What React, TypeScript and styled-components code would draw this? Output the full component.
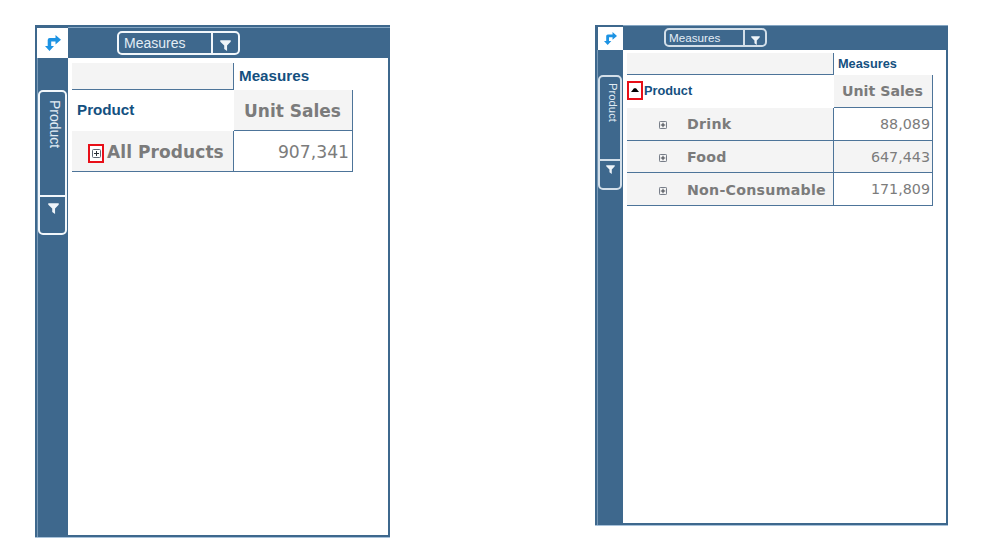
import React from "react";
import styled, { createGlobalStyle, ThemeProvider } from "styled-components";

const BLUE = "#3e688d";
const INK = "#14507f";
const LINE = "#4d7499";

const Global = createGlobalStyle`
  body { margin: 0; background: #fff; }
  * { box-sizing: border-box; }
`;

const large = {
  width: 355, height: 512, mt: 25,
  side: 33, head: 33, corner: 31, cornerH: 30,
  pillLeft: 49, pillTop: 6, pillW: 123, pillH: 24, pillText: 14, pillPad: 5, pillBtn: 27,
  sideTop: 32, sideW: 29, sideH: 145, sideText: 14, sideBtn: 38, sidePad: 8, funnel: 11,
  padTop: 5, padLeft: 4, c1: 162, c2: 119, r1: 27, r2: 41,
  head1: 15.2, headPad: 5, headLift: 2, body: 17, num: 17.2, numPad: 3, track: 0.08,
  arrow: 16, chipLine: "#f2f7fb",
};
type Scale = typeof large;
const small: Scale = {
  width: 353, height: 500, mt: 25,
  side: 28, head: 25, corner: 25, cornerH: 23,
  pillLeft: 41, pillTop: 3, pillW: 103, pillH: 19, pillText: 11.7, pillPad: 3, pillBtn: 22,
  sideTop: 25, sideW: 24, sideH: 115, sideText: 11.3, sideBtn: 29, sidePad: 6, funnel: 9,
  padTop: 3, padLeft: 4, c1: 207, c2: 99, r1: 22, r2: 33,
  head1: 12.75, headPad: 4, headLift: 0, body: 14.2, num: 14.3, numPad: 2, track: 0.25,
  arrow: 13, chipLine: "#d3dfe9",
};

declare module "styled-components" {
  export interface DefaultTheme extends Scale {}
}

const Page = styled.main`
  width: 987px;
  height: 549px;
  padding-left: 35px;
  display: flex;
  align-items: flex-start;
  gap: 205px;
  overflow: hidden;
  font-family: "Liberation Sans", Arial, sans-serif;
`;

const Panel = styled.section`
  flex: none;
  width: ${({ theme }) => theme.width}px;
  height: ${({ theme }) => theme.height}px;
  margin-top: ${({ theme }) => theme.mt}px;
  display: grid;
  grid-template: ${({ theme }) => theme.head}px 1fr / ${({ theme }) => theme.side}px 1fr;
  background: #fff;
  box-shadow: inset 0 0 0 2px ${BLUE}, 0 1px 0 #a8c2da;
`;

const Corner = styled.div`
  background: ${BLUE};
  display: flex;
  justify-content: flex-end;
  align-items: flex-end;
`;

const CornerButton = styled.div`
  width: ${({ theme }) => theme.corner}px;
  height: ${({ theme }) => theme.cornerH}px;
  background: #fff;
  display: flex;
  align-items: center;
  justify-content: center;
`;

const TopBar = styled.header`
  background: linear-gradient(#85a6c3, #85a6c3) 0 ${({ theme }) => (theme.body > 15 ? 2 : 0)}px / 100% 1px no-repeat ${BLUE};
  padding: ${({ theme }) => theme.pillTop}px 0 0 ${({ theme }) => theme.pillLeft}px;
`;

const SideBar = styled.aside`
  background: linear-gradient(90deg, transparent 2px, #7899b6 2px, #7899b6 3px, transparent 3px), ${BLUE};
  padding: ${({ theme }) => theme.sideTop}px 1px 0 0;
  display: flex;
  flex-direction: column;
  align-items: flex-end;
`;

const Chip = styled.div<{ $vertical?: boolean }>`
  display: flex;
  flex-direction: ${({ $vertical }) => ($vertical ? "column" : "row")};
  width: ${({ $vertical, theme }) => ($vertical ? theme.sideW : theme.pillW)}px;
  height: ${({ $vertical, theme }) => ($vertical ? theme.sideH : theme.pillH)}px;
  border: 2px solid ${({ theme }) => theme.chipLine};
  border-radius: 5px;
  background: ${BLUE};
  color: #e3edf5;
`;

const ChipLabel = styled.span<{ $vertical?: boolean }>`
  flex: 1;
  display: flex;
  align-items: center;
  white-space: nowrap;
  font-size: ${({ $vertical, theme }) => ($vertical ? theme.sideText : theme.pillText)}px;
  line-height: 1;
  writing-mode: ${({ $vertical }) => ($vertical ? "vertical-rl" : "horizontal-tb")};
  padding: ${({ $vertical, theme }) => ($vertical ? `${theme.sidePad}px 0 0 5px` : `0 0 0 ${theme.pillPad}px`)};
`;

const ChipButton = styled.span<{ $vertical?: boolean }>`
  flex: 0 0 ${({ $vertical, theme }) => ($vertical ? theme.sideBtn : theme.pillBtn)}px;
  display: flex;
  justify-content: center;
  align-items: ${({ $vertical }) => ($vertical ? "flex-start" : "center")};
  padding-top: ${({ $vertical, theme }) => ($vertical ? theme.sidePad - 2 : 5)}px;
  padding-left: ${({ $vertical }) => ($vertical ? 1 : 0)}px;
  border: 0 solid ${({ theme }) => theme.chipLine};
  border-width: ${({ $vertical }) => ($vertical ? "2px 0 0 0" : "0 0 0 2px")};
`;

const Table = styled.div`
  padding: ${({ theme }) => theme.padTop}px 0 0 ${({ theme }) => theme.padLeft}px;
  display: grid;
  grid-template-columns: ${({ theme }) => theme.c1}px ${({ theme }) => theme.c2}px;
  grid-template-rows: ${({ theme }) => theme.r1}px ${({ theme }) => theme.r2}px;
  grid-auto-rows: ${({ theme }) => (theme.body > 15 ? "41px" : "32.67px")};
  align-content: start;
`;

const Cell = styled.div<{ $shade?: boolean; $lined?: boolean; $right?: boolean; $drop?: number }>`
  display: flex;
  align-items: center;
  justify-content: ${({ $right }) => ($right ? "flex-end" : "flex-start")};
  padding-top: ${({ $drop = 0 }) => $drop}px;
  background: ${({ $shade }) => ($shade ? "#f4f4f4" : "#fff")};
  border: 0 solid ${LINE};
  border-width: ${({ $lined }) => ($lined ? "0 1px 1px 0" : "0")};
  white-space: nowrap;
  line-height: 1;
`;

const Heading = styled.span<{ $tight?: boolean }>`
  padding-left: ${({ $tight, theme }) => ($tight ? 1 : theme.headPad)}px;
  padding-bottom: ${({ theme }) => theme.headLift}px;
  font-size: ${({ theme }) => theme.head1}px;
  font-weight: 700;
  color: ${INK};
`;

const Member = styled.span<{ $pad: number; $tracked?: boolean }>`
  padding-left: ${({ $pad }) => $pad}px;
  font: 700 ${({ theme }) => theme.body}px/1 "DejaVu Sans", Verdana, sans-serif;
  letter-spacing: ${({ $tracked, theme }) => ($tracked ? theme.track : 0)}px;
  color: #7b7b7b;
`;

const Figure = styled.span`
  padding-right: ${({ theme }) => theme.numPad}px;
  font: 400 ${({ theme }) => theme.num}px/1 "DejaVu Sans", Verdana, sans-serif;
  color: #7c7c7c;
`;

const Marked = styled.span<{ $offset?: number; $drop: number }>`
  flex: none;
  width: 16px;
  height: 19px;
  margin-left: ${({ $offset = 0 }) => $offset}px;
  margin-top: ${({ $drop }) => $drop}px;
  border: 2px solid #e80f18;
  display: flex;
  align-items: center;
  justify-content: center;
  background: #fff;
`;

const Expander = styled.span`
  display: flex;
  margin: 2px 0 0 32px;
`;

const Pivot = ({ size }: { size: number }) => (
  <svg width={size} height={size} viewBox="0 0 16 16" fill="#1d93e3">
    <path d="M2.7 5Q2.7 3 4.7 3H10.5V0L16 4.8L10.5 9.4V6.4H6.2V11H9L4.5 16L0 11H2.7Z" />
  </svg>
);

const Funnel = ({ size }: { size: number }) => (
  <svg width={size} height={size} viewBox="0 0 12 12" fill="#eef4f9">
    <path d="M.3.4H11.7V1.8L7.7 6V12L4.6 9.8V6L.3 1.8Z" />
  </svg>
);

const Plus = ({ size }: { size: number }) => (
  <svg width={size} height={size} viewBox="0 0 9 9" fill="none" stroke="#5f6773">
    <rect x=".5" y=".5" width="8" height="8" rx="1" />
    <path d="M2 4.5H7M4.5 2V7" stroke="#2c3138" />
  </svg>
);

const Triangle = () => (
  <svg width="8" height="4" viewBox="0 0 8 4">
    <path d="M0 4L3 .3H5L8 4Z" fill="#000" />
  </svg>
);

const Frame = ({ scale, children }: { scale: Scale; children: React.ReactNode }) => (
  <ThemeProvider theme={scale}>
    <Panel>
      <Corner>
        <CornerButton><Pivot size={scale.arrow} /></CornerButton>
      </Corner>
      <TopBar>
        <Chip>
          <ChipLabel>Measures</ChipLabel>
          <ChipButton><Funnel size={scale.funnel} /></ChipButton>
        </Chip>
      </TopBar>
      <SideBar>
        <Chip $vertical>
          <ChipLabel $vertical>Product</ChipLabel>
          <ChipButton $vertical><Funnel size={scale.funnel} /></ChipButton>
        </Chip>
      </SideBar>
      <Table>
        <Cell $shade $lined />
        <Cell><Heading>Measures</Heading></Cell>
        {children}
      </Table>
    </Panel>
  </ThemeProvider>
);

const rows = [
  { name: "Drink", value: "88,089" },
  { name: "Food", value: "647,443" },
  { name: "Non-Consumable", value: "171,809" },
];

export default function App() {
  return (
    <>
      <Global />
      <Page>
        <Frame scale={large}>
          <Cell><Heading>Product</Heading></Cell>
          <Cell $shade $lined $drop={2}><Member $pad={10}>Unit Sales</Member></Cell>
          <Cell $shade $lined $drop={3}>
            <Marked $offset={16} $drop={2}><Plus size={9} /></Marked>
            <Member $pad={3} $tracked>All Products</Member>
          </Cell>
          <Cell $lined $right $drop={4}><Figure>907,341</Figure></Cell>
        </Frame>
        <Frame scale={small}>
          <Cell>
            <Marked $drop={-3}><Triangle /></Marked>
            <Heading $tight>Product</Heading>
          </Cell>
          <Cell $shade $lined><Member $pad={8}>Unit Sales</Member></Cell>
          {rows.map((row, i) => (
            <React.Fragment key={row.name}>
              <Cell $shade $lined $drop={1}>
                <Expander><Plus size={8} /></Expander>
                <Member $pad={20} $tracked>{row.name}</Member>
              </Cell>
              <Cell $lined $right $drop={1} $shade={i % 2 === 1}><Figure>{row.value}</Figure></Cell>
            </React.Fragment>
          ))}
        </Frame>
      </Page>
    </>
  );
}
